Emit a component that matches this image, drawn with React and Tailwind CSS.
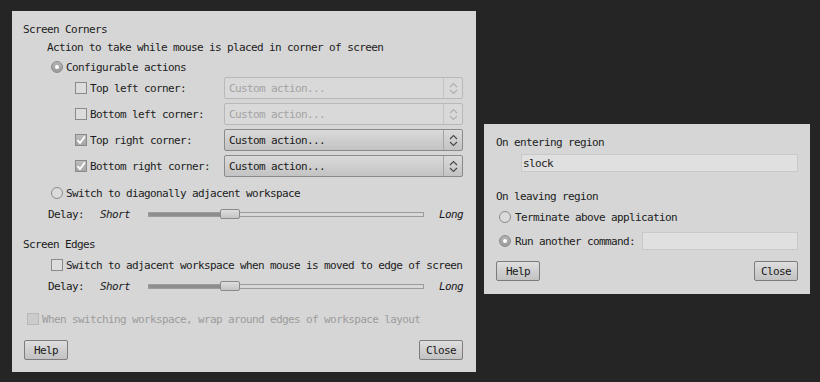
import React from 'react';

const font = { fontFamily: '"DejaVu Sans Mono", "Liberation Mono", monospace' };

function Checkbox({ checked, disabled }) {
    if (disabled) {
        return <span className="w-[12px] h-[12px] shrink-0 border border-[#b8b8b8] bg-[#cbcbcb]" />;
    }
    return (
        <span className={`w-[12px] h-[12px] shrink-0 border border-[#8a8a8a] flex items-center justify-center ${checked ? 'bg-gradient-to-b from-[#bdbdbd] to-[#a6a6a6]' : 'bg-[#dcdcdc]'}`}>
            {checked && (
                <svg width="10" height="10" viewBox="0 0 10 10">
                    <path d="M1.5 5.2 L4 8 L8.8 1.5" fill="none" stroke="#ffffff" strokeWidth="1.8" />
                </svg>
            )}
        </span>
    );
}

function Radio({ checked }) {
    return (
        <span className={`w-[12px] h-[12px] shrink-0 rounded-full border border-[#8c8c8c] flex items-center justify-center ${checked ? 'bg-gradient-to-b from-[#b4b4b4] to-[#9c9c9c]' : 'bg-[#dadada]'}`}>
            {checked && <span className="w-[4px] h-[4px] rounded-full bg-white" />}
        </span>
    );
}

function Chevrons({ color }) {
    return (
        <svg width="9" height="13" viewBox="0 0 9 13">
            <path d="M1 5 L4.5 1.5 L8 5" fill="none" stroke={color} strokeWidth="1.2" />
            <path d="M1 8 L4.5 11.5 L8 8" fill="none" stroke={color} strokeWidth="1.2" />
        </svg>
    );
}

function Combo({ enabled }) {
    return (
        <div className={`w-[239px] h-[22px] flex border rounded-[2px] ${enabled ? 'border-[#8a8a8a] bg-gradient-to-b from-[#dadada] to-[#c3c3c3] text-[#1a1a1a]' : 'border-[#b8b8b8] bg-[#d9d9d9] text-[#a3a3a3]'}`}>
            <span className="flex-1 flex items-center pl-[4px]">Custom action...</span>
            <span className={`w-[19px] flex items-center justify-center border-l ${enabled ? 'border-[#a5a5a5]' : 'border-[#c4c4c4]'}`}>
                <Chevrons color={enabled ? '#4a4a4a' : '#b0b0b0'} />
            </span>
        </div>
    );
}

function CornerRow({ label, checked }) {
    return (
        <div className="h-[22px] flex items-center">
            <div className="w-[149px] pl-[52px] flex items-center gap-[3px] box-content">
                <Checkbox checked={checked} />
                <span>{label}</span>
            </div>
            <Combo enabled={checked} />
        </div>
    );
}

function Slider() {
    return (
        <div className="relative w-[276px] h-[12px] flex items-center">
            <div className="w-full h-[5px] border border-[#9c9c9c] bg-[#d8d8d8] flex">
                <div className="w-[74px] h-full bg-[#8e8e8e]" />
            </div>
            <div className="absolute left-[72px] top-[1px] w-[20px] h-[10px] rounded-[2px] border border-[#8a8a8a] bg-gradient-to-b from-[#dedede] to-[#c4c4c4]" />
        </div>
    );
}

function DelayRow({ className }) {
    return (
        <div className={`h-[20px] flex items-center pl-[25px] ${className}`}>
            <span className="w-[52px]">Delay:</span>
            <span className="w-[48px] italic">Short</span>
            <Slider />
            <span className="ml-auto italic">Long</span>
        </div>
    );
}

function Button({ children }) {
    return (
        <button className="w-[44px] h-[20px] rounded-[2px] border border-[#7c7c7c] bg-gradient-to-b from-[#dedede] to-[#c2c2c2] text-[#1a1a1a] flex items-center justify-center">
            {children}
        </button>
    );
}

export default function App() {
    return (
        <div className="relative w-[820px] h-[382px] bg-[#252525] overflow-hidden text-[11px] tracking-[-0.62px] text-[#1c1c1c] leading-none" style={font}>
            <div className="absolute left-[12px] top-[11px] w-[464px] h-[361px] bg-[#d6d6d6] pl-[11px] pr-[13px] pt-[9px] flex flex-col">
                <div className="h-[18px] flex items-center">Screen Corners</div>
                <div className="h-[19px] flex items-center pl-[24px]">Action to take while mouse is placed in corner of screen</div>
                <div className="h-[20px] flex items-center pl-[28px] gap-[3px]">
                    <Radio checked />
                    <span>Configurable actions</span>
                </div>
                <div className="flex flex-col gap-[4px]">
                    <CornerRow label="Top left corner:" />
                    <CornerRow label="Bottom left corner:" />
                    <CornerRow label="Top right corner:" checked />
                    <CornerRow label="Bottom right corner:" checked />
                </div>
                <div className="h-[22px] mt-[5px] flex items-center pl-[28px] gap-[3px]">
                    <Radio />
                    <span>Switch to diagonally adjacent workspace</span>
                </div>
                <DelayRow />
                <div className="h-[20px] mt-[10px] flex items-center">Screen Edges</div>
                <div className="h-[20px] mt-[1px] flex items-center pl-[28px] gap-[3px]">
                    <Checkbox />
                    <span>Switch to adjacent workspace when mouse is moved to edge of screen</span>
                </div>
                <DelayRow className="mt-[1px]" />
                <div className="h-[20px] mt-[13px] flex items-center pl-[4px] gap-[3px] text-[#9c9c9c]">
                    <Checkbox disabled />
                    <span>When switching workspace, wrap around edges of workspace layout</span>
                </div>
                <div className="mt-[11px] flex justify-between pl-[1px]">
                    <Button>Help</Button>
                    <Button>Close</Button>
                </div>
            </div>

            <div className="absolute left-[484px] top-[124px] w-[326px] h-[170px] bg-[#d6d6d6] pl-[12px] pr-[12px] pt-[9px] flex flex-col">
                <div className="h-[18px] flex items-center">On entering region</div>
                <div className="mt-[3px] ml-[25px] h-[18px] border border-[#c9c9c9] bg-[#e0e0e0] flex items-center pl-[1px]">slock</div>
                <div className="mt-[15px] h-[18px] flex items-center">On leaving region</div>
                <div className="mt-[3px] h-[18px] flex items-center pl-[3px] gap-[4px]">
                    <Radio />
                    <span>Terminate above application</span>
                </div>
                <div className="mt-[5px] h-[20px] flex items-center pl-[3px] gap-[4px]">
                    <Radio checked />
                    <span>Run another command:</span>
                    <div className="ml-auto w-[156px] h-[18px] border border-[#c9c9c9] bg-[#e0e0e0]" />
                </div>
                <div className="mt-[10px] flex justify-between">
                    <Button>Help</Button>
                    <Button>Close</Button>
                </div>
            </div>
        </div>
    );
}
